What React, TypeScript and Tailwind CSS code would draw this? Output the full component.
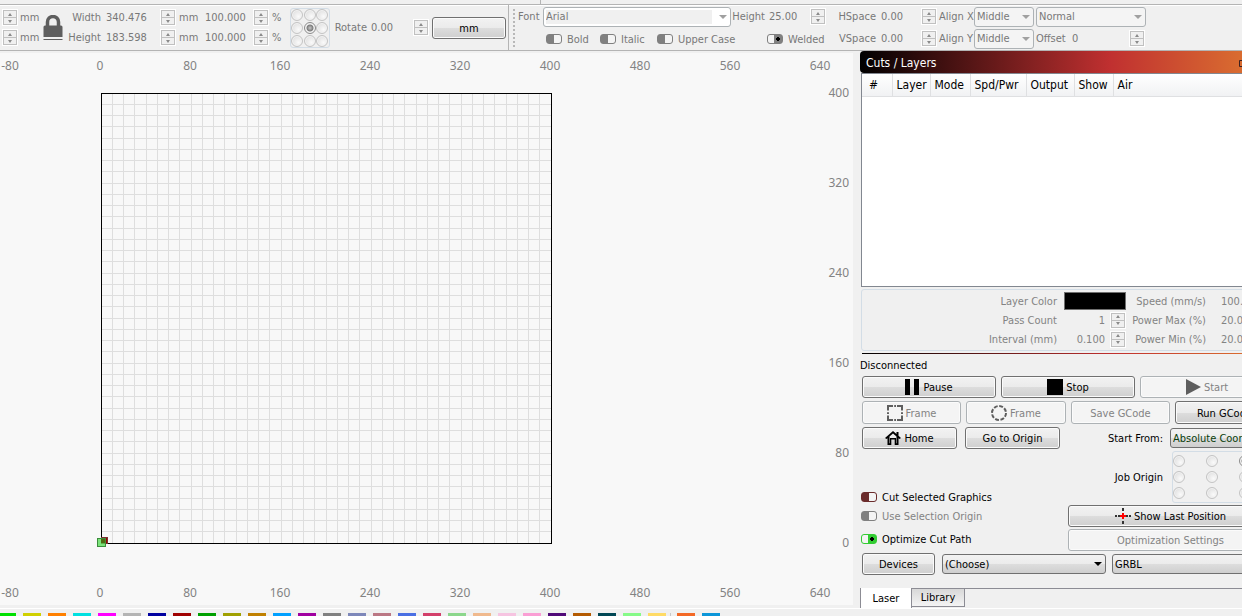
import { useId } from 'react';
import type { ReactNode } from 'react';
import clsx from 'clsx';
import { twMerge } from 'tailwind-merge';

const X_TICKS = [-80, 0, 80, 160, 240, 320, 400, 480, 560, 640];
const Y_TICKS = [400, 320, 240, 160, 80, 0];

const GRID_LINES = Array.from({ length: 39 }, (_, i) => Math.floor((i + 1) * 11.25));

const PALETTE = [
  '#00e000', '#d0d000', '#ff8000', '#00e0e0', '#ff00ff', '#b4b4b4', '#0000a0',
  '#a00000', '#00a000', '#a0a000', '#c08000', '#00a0ff', '#a000a0', '#808080',
  '#7d87b9', '#bb7784', '#4a6fe3', '#d33f6a', '#8cd78c', '#f0b98d', '#f6c4e1',
  '#fa9ed4', '#500a78', '#b45a00', '#004754', '#86fa88', '#ffdb66',
];
const TOOL_COLORS = ['#f36926', '#0c96d9'];

const LAYER_COLUMNS = [
  { label: '#', width: 'w-[30px] pl-[7px]' },
  { label: 'Layer', width: 'w-[38px]' },
  { label: 'Mode', width: 'w-[40px]' },
  { label: 'Spd/Pwr', width: 'w-[56px]' },
  { label: 'Output', width: 'w-[48px]' },
  { label: 'Show', width: 'w-[39px]' },
  { label: 'Air', width: '' },
];

function Spin({ name }: { name: string }) {
  return (
    <span className="flex h-[15px] w-[14px] shrink-0 flex-col border border-[#c0c0c0] bg-[#f0f0f0] outline outline-white">
      <button type="button" aria-label={`Increase ${name}`} className="flex flex-1 items-center justify-center border-b border-[#c0c0c0]">
        <svg width="4" height="3" viewBox="0 0 4 3"><path d="M2 0L4 3H0Z" fill="#8a8a8a" /></svg>
      </button>
      <button type="button" aria-label={`Decrease ${name}`} className="flex flex-1 items-center justify-center">
        <svg width="4" height="3" viewBox="0 0 4 3"><path d="M0 0H4L2 3Z" fill="#8a8a8a" /></svg>
      </button>
    </span>
  );
}

interface FieldProps {
  label: string;
  value: string;
  labelClass?: string;
  inputClass?: string;
}

function Field({ label, value, labelClass, inputClass }: FieldProps) {
  const id = useId();
  return (
    <>
      <label htmlFor={id} className={twMerge('shrink-0 pt-px text-right', labelClass)}>{label}</label>
      <input id={id} defaultValue={value} className={clsx('min-w-0 shrink-0 bg-transparent pt-px outline-none', inputClass)} />
    </>
  );
}

const TOGGLE_STYLES = {
  off: 'border-[#808080] bg-[linear-gradient(90deg,#808080_50%,#f4f4f4_50%)]',
  on: 'border-[#808080] bg-[radial-gradient(circle_at_10px_4px,#000_2px,transparent_2px),linear-gradient(90deg,#f4f4f4_40%,#808080_40%)]',
  red: 'border-[#6b2c2c] bg-[linear-gradient(90deg,#6b2c2c_50%,#f4f4f4_50%)]',
  green: 'border-[#33cc33] bg-[radial-gradient(circle_at_10px_4px,#000_2px,transparent_2px),linear-gradient(90deg,#f4f4f4_40%,#33cc33_40%)]',
};

interface ToggleProps {
  label: string;
  kind?: keyof typeof TOGGLE_STYLES;
  className?: string;
}

function Toggle({ label, kind = 'off', className }: ToggleProps) {
  return (
    <label className={clsx('flex shrink-0 items-center gap-[5px] whitespace-nowrap', className)}>
      <input
        type="checkbox"
        defaultChecked={kind === 'on' || kind === 'green'}
        className={clsx('h-[10px] w-4 shrink-0 appearance-none rounded-[3px] border bg-origin-padding', TOGGLE_STYLES[kind])}
      />
      <span className="pt-[2px]">{label}</span>
    </label>
  );
}

interface PickProps {
  label: string;
  value: string;
  className?: string;
  selectClass?: string;
  arrow?: string;
}

function Pick({ label, value, className, selectClass, arrow = '#a0a0a0' }: PickProps) {
  return (
    <span className={clsx('relative shrink-0', className)}>
      <select aria-label={label} className={clsx('h-full w-full appearance-none rounded-[3px] border pt-px pl-[2px] outline-none', selectClass)}>
        <option>{value}</option>
      </select>
      <svg className="pointer-events-none absolute top-1/2 right-1 -mt-[2px]" width="8" height="4" viewBox="0 0 8 4">
        <path d="M0 0H8L4 4Z" fill={arrow} />
      </svg>
    </span>
  );
}

const MUTED_SELECT = 'border-[#adb2b5] bg-[#f4f4f4] text-[#787878]';
const RAISED = 'border-[#707070] bg-[linear-gradient(#f2f2f2,#ebebeb_50%,#dddddd_50%,#cfcfcf)] text-black';

interface PushButtonProps {
  children: ReactNode;
  icon?: ReactNode;
  muted?: boolean;
  className?: string;
}

function PushButton({ children, icon, muted, className }: PushButtonProps) {
  return (
    <button
      type="button"
      disabled={muted}
      className={twMerge(
        'flex h-[22px] shrink-0 items-center justify-center gap-[3px] rounded-[3px] border whitespace-nowrap shadow-[inset_0_0_0_1px_#fbfbfb]',
        muted ? 'border-[#adb2b5] bg-[#f4f4f4] text-[#838383]' : RAISED,
        className,
      )}
    >
      {icon}
      <span className="pt-[2px]">{children}</span>
    </button>
  );
}

interface AnchorPadProps {
  name: string;
  selected: number;
  className: string;
}

function AnchorPad({ name, selected, className }: AnchorPadProps) {
  return (
    <div role="radiogroup" aria-label={name} className={clsx('grid shrink-0 grid-cols-3 content-center rounded-[3px] border border-[#d3dde6]', className)}>
      {Array.from({ length: 9 }, (_, i) => (
        <input
          key={i}
          type="radio"
          name={name}
          aria-label={`${name} ${i + 1}`}
          defaultChecked={i === selected}
          className="size-3 appearance-none self-center rounded-full border border-[#c4c4c4] bg-[radial-gradient(circle_at_65%_65%,#fafafa,#d8d8d8)] shadow-[inset_0_0_0_1px_#f3f3f3] checked:border-[#8c8c8c] checked:bg-[radial-gradient(circle_at_50%_50%,#c8c8c8_0,#7c7c7c_3px,#f0f0f0_4px)]"
        />
      ))}
    </div>
  );
}

function LockIcon() {
  return (
    <svg width="20" height="26" viewBox="0 0 20 26">
      <path d="M4.500 11V7a5.500 5.500 0 0 1 11 0V11" fill="none" stroke="#5e5e5e" strokeWidth="3.500" />
      <path d="M2 10.500H18Q19.500 10.500 19.500 12V22H.5V12Q.5 10.500 2 10.500Z" fill="#5e5e5e" />
      <path d="M.5 24.500H19.500" stroke="#5e5e5e" />
    </svg>
  );
}

function TransformBar() {
  return (
    <div className="flex h-full w-[509px] shrink-0 items-center border-r border-[#b4b4b4]">
      <div className="flex w-[42px] shrink-0 flex-col gap-[5px] pl-[3px]">
        <div className="flex items-center gap-[3px]"><Spin name="X" /><span className="pt-px">mm</span></div>
        <div className="flex items-center gap-[3px]"><Spin name="Y" /><span className="pt-px">mm</span></div>
      </div>
      <button type="button" aria-label="Lock aspect ratio" className="w-[22px] shrink-0 pl-px"><LockIcon /></button>
      <div className="flex flex-col gap-[5px]">
        <div className="flex items-center">
          <Field label="Width" value="340.476" labelClass="w-[37px]" inputClass="ml-[5px] w-[55px]" />
          <Spin name="width" /><span className="ml-1 w-[26px] pt-px">mm</span>
          <input aria-label="Width percent" defaultValue="100.000" className="w-[49px] bg-transparent pt-px" />
          <Spin name="width percent" /><span className="ml-1 pt-px">%</span>
        </div>
        <div className="flex items-center">
          <Field label="Height" value="183.598" labelClass="w-[37px]" inputClass="ml-[5px] w-[55px]" />
          <Spin name="height" /><span className="ml-1 w-[26px] pt-px">mm</span>
          <input aria-label="Height percent" defaultValue="100.000" className="w-[49px] bg-transparent pt-px" />
          <Spin name="height percent" /><span className="ml-1 pt-px">%</span>
        </div>
      </div>
      <div className="ml-auto flex items-center pr-[2px]">
        <AnchorPad name="Anchor" selected={4} className="h-10 w-10 grid-rows-[13px_13px_13px]" />
        <Field label="Rotate" value="0.00" labelClass="ml-[3px] w-[34px]" inputClass="ml-1 w-[43px]" />
        <Spin name="rotation" />
        <PushButton className="ml-1 w-[74px]">mm</PushButton>
      </div>
    </div>
  );
}

function TextBar() {
  return (
    <div className="flex h-full items-center">
      <div className="ml-1 h-[38px] w-[2px] shrink-0 bg-[repeating-linear-gradient(#b8b8b8_0_2px,transparent_2px_4px)]" />
      <div className="flex w-[311px] shrink-0 flex-col gap-[2px]">
        <div className="flex h-5 items-center">
          <span className="w-[28px] pt-px pl-[3px]">Font</span>
          <Pick label="Font" value="Arial" className="h-5 w-[188px]" selectClass="border-[#adb2b5] bg-[#f0f0f0] text-[#787878] shadow-[inset_0_0_0_2px_#fff,inset_-18px_0_0_#fff]" />
          <Field label="Height" value="25.00" labelClass="w-[34px]" inputClass="ml-1 w-[42px]" />
          <Spin name="height" />
        </div>
        <div className="flex h-5 items-center pl-[31px]">
          <Toggle label="Bold" className="w-[54px]" />
          <Toggle label="Italic" className="w-[57px]" />
          <Toggle label="Upper Case" className="w-[110px]" />
          <Toggle label="Welded" kind="on" />
        </div>
      </div>
      <div className="flex shrink-0 flex-col gap-[2px]">
        <div className="flex h-5 items-center">
          <Field label="HSpace" value="0.00" labelClass="w-[50px]" inputClass="ml-[5px] w-[41px]" />
          <Spin name="horizontal space" />
          <span className="w-[38px] pt-px pl-[3px] whitespace-nowrap">Align X</span>
          <Pick label="Align X" value="Middle" className="h-5 w-[60px]" selectClass={MUTED_SELECT} />
          <Pick label="Style" value="Normal" className="ml-[2px] h-5 w-[110px]" selectClass={MUTED_SELECT} />
        </div>
        <div className="flex h-5 items-center">
          <Field label="VSpace" value="0.00" labelClass="w-[50px]" inputClass="ml-[5px] w-[41px]" />
          <Spin name="vertical space" />
          <span className="w-[38px] pt-px pl-[3px] whitespace-nowrap">Align Y</span>
          <Pick label="Align Y" value="Middle" className="h-5 w-[60px]" selectClass={MUTED_SELECT} />
          <Field label="Offset" value="0" labelClass="w-[36px] pl-[2px] text-left" inputClass="ml-[2px] w-[58px]" />
          <Spin name="offset" />
        </div>
      </div>
    </div>
  );
}

function RulerRow({ className }: { className: string }) {
  return (
    <div className={clsx('-ml-[35px] flex shrink-0 items-center', className)}>
      {X_TICKS.map((tick) => (
        <span key={tick} className="w-[90px] shrink-0 text-center">{tick}</span>
      ))}
    </div>
  );
}

function Workspace() {
  return (
    <section className="mt-[2px] mb-[3px] flex min-w-0 flex-1 flex-col overflow-hidden bg-[#f8f8f8] font-['Noto_Sans',sans-serif] text-[12px] text-[#838383]">
      <RulerRow className="h-[26px]" />
      <div className="flex flex-1 justify-between">
        <svg className="mt-[14px] ml-[101px] shrink-0 overflow-visible" width="451" height="451" shapeRendering="crispEdges">
          <g stroke="#dedede">
            {GRID_LINES.map((p) => (
              <path key={p} d={`M${p + 0.5} 1V450M1 ${p + 0.5}H450`} />
            ))}
          </g>
          <rect x="0.5" y="0.5" width="450" height="450" fill="none" stroke="#000" />
          {/* laser head and origin markers */}
          <rect x="0.5" y="444.500" width="6" height="6" fill="#a00000" stroke="#7c3030" />
          <rect x="-3.500" y="445.500" width="8" height="8" fill="#50dc50" fillOpacity="0.750" stroke="#3c8c3c" />
          <rect x="0" y="446" width="4" height="4" fill="#4c6a10" />
        </svg>
        <div className="flex flex-col gap-[72px] pt-[5px] pr-[4px] text-right leading-[18px]">
          {Y_TICKS.map((tick) => <span key={tick}>{tick}</span>)}
        </div>
      </div>
      <RulerRow className="h-[24px]" />
    </section>
  );
}

function CutLayers() {
  return (
    <>
      <div className="flex h-[22px] shrink-0 items-center justify-between overflow-hidden rounded-l-[4px] bg-[linear-gradient(90deg,#000,#c03030_250px,#d96c30_382px)] pl-[6px] text-[12px] text-white">
        <h2 className="pt-[2px]">Cuts / Layers</h2>
        <svg className="mr-[25px]" width="10" height="10" viewBox="0 0 10 10" fill="none" stroke="#3c2020">
          <path d="M3.500 3.500V.5H9.500V6.500H6.500M.5 3.500H6.500V9.500H.5Z" />
        </svg>
      </div>
      <div className="ml-px h-[214px] shrink-0 border border-[#828790] bg-white text-[12px] text-black">
        <table className="w-full table-fixed border-collapse">
          <thead>
            <tr className="h-[22px] bg-linear-to-b from-white to-[#f1f2f4]">
              {LAYER_COLUMNS.map((column) => (
                <th key={column.label} className={twMerge('border-r border-b border-[#dfe0e2] p-0 pt-px pl-1 text-left font-normal whitespace-nowrap', column.width)}>
                  {column.label}
                </th>
              ))}
            </tr>
          </thead>
        </table>
      </div>
      <div className="mt-[2px] ml-px flex h-[62px] shrink-0 flex-col justify-center rounded-[3px] border border-[#d3dde6] text-[#838383]">
        <div className="flex h-[19px] items-center">
          <span className="w-[195px] pt-[2px] text-right">Layer Color</span>
          <button type="button" aria-label="Layer Color" className="ml-[7px] h-[18px] w-[62px] border border-[#707070] bg-black" />
          <Field label="Speed (mm/s)" value="100.0" labelClass="w-[80px]" inputClass="ml-[15px] w-[40px]" />
        </div>
        <div className="flex h-[19px] items-center">
          <Field label="Pass Count" value="1" labelClass="w-[195px]" inputClass="w-[48px] text-right" />
          <span className="ml-[6px] flex"><Spin name="pass count" /></span>
          <Field label="Power Max (%)" value="20.00" labelClass="w-[81px]" inputClass="ml-[15px] w-[40px]" />
        </div>
        <div className="flex h-[19px] items-center">
          <Field label="Interval (mm)" value="0.100" labelClass="w-[195px]" inputClass="w-[48px] text-right" />
          <span className="ml-[6px] flex"><Spin name="interval" /></span>
          <Field label="Power Min (%)" value="20.00" labelClass="w-[81px]" inputClass="ml-[15px] w-[40px]" />
        </div>
      </div>
    </>
  );
}

function LaserPanel() {
  return (
    <>
      <div className="mt-[2px] ml-[2px] h-px shrink-0 bg-[linear-gradient(90deg,#000,#c03030_250px,#d96c30_382px)]" />
      <p className="flex h-[22px] shrink-0 items-center pt-px">Disconnected</p>
      <div className="flex flex-col gap-[3px] pl-[2px]">
        <div className="flex gap-[5px]">
          <PushButton className="w-[134px]" icon={<svg width="15" height="16"><path d="M0 0h5v16H0zM9 0h5v16h-5z" /></svg>}>Pause</PushButton>
          <PushButton className="w-[134px]" icon={<svg width="16" height="16"><path d="M0 0h16v16H0z" /></svg>}>Stop</PushButton>
          <PushButton muted className="w-[134px]" icon={<svg width="15" height="16"><path d="M0 0L15 8L0 16Z" fill="#5e5e5e" /></svg>}>Start</PushButton>
        </div>
        <div className="flex gap-[5px]">
          <PushButton
            muted
            className="h-[23px] w-[99px]"
            icon={(
              <svg width="16" height="16" fill="none" stroke="#5e5e5e" strokeWidth="2">
                <path d="M1 5.500V1H6M10 1H15V5.500M15 10.500V15H10M6 15H1V10.500M1 7.200V9M15 7.200V9M7.200 1H9M7.200 15H9" />
              </svg>
            )}
          >
            Frame
          </PushButton>
          <PushButton
            muted
            className="h-[23px] w-[100px]"
            icon={(
              <svg width="16" height="16" fill="none" stroke="#5e5e5e" strokeWidth="2">
                <circle cx="8" cy="8" r="7" strokeDasharray="3.900 1.600" />
              </svg>
            )}
          >
            Frame
          </PushButton>
          <PushButton muted className="h-[23px] w-[99px]">Save GCode</PushButton>
          <PushButton className="h-[23px] w-[99px]">Run GCode</PushButton>
        </div>
        <div className="flex items-center">
          <PushButton
            className="w-[95px]"
            icon={(
              <svg width="16" height="14" viewBox="0 0 16 14">
                <path d="M8 0L11.500 3V1H13.500V4.800L16 7L14.500 8L13.500 7.200V14H9.700V8.500H6.300V14H2.500V7.200L1.500 8L0 7ZM8 2.600L4.500 5.600V12.200H5V7H11V12.200H11.500V5.600Z" />
              </svg>
            )}
          >
            Home
          </PushButton>
          <PushButton className="ml-2 w-[95px]">Go to Origin</PushButton>
          <span className="w-[103px] pt-[2px] text-right">Start From:</span>
          <Pick label="Start From" value="Absolute Coords" arrow="#000" className="ml-[7px] h-[20px] w-[104px]" selectClass="border-[#707070] bg-[linear-gradient(#f2f2f2,#ebebeb_50%,#dddddd_50%,#cfcfcf)] text-[#0a3c0a]" />
        </div>
      </div>
      <div className="mt-[2px] flex h-[52px] shrink-0">
        <div className="flex w-[200px] flex-col justify-end">
          <Toggle label="Cut Selected Graphics" kind="red" className="h-3 pl-px" />
        </div>
        <span className="w-[103px] self-center pt-[2px] text-right">Job Origin</span>
        <AnchorPad name="Job Origin" selected={2} className="ml-[9px] w-[101px] grid-rows-[16px_16px_16px]" />
      </div>
      <div className="mt-[2px] flex shrink-0 pl-px">
        <div className="flex w-[207px] flex-col gap-[5px]">
          <Toggle label="Use Selection Origin" className="h-[22px] text-[#838383]" />
          <Toggle label="Optimize Cut Path" kind="green" className="h-[14px]" />
        </div>
        <div className="flex flex-col gap-[2px]">
          <PushButton
            className="w-[205px]"
            icon={(
              <svg width="16" height="16">
                <path d="M7 0h2v3H7zM7 13h2v3H7zM0 7h2v2H0zM3 7h2v2H3zM11 7h2v2h-2zM14 7h2v2h-2z" fill="#333" />
                <path d="M7 5h2v2h2v2H9v2H7V9H5V7h2z" fill="#f00" />
              </svg>
            )}
          >
            Show Last Position
          </PushButton>
          <PushButton muted className="w-[205px]">Optimization Settings</PushButton>
        </div>
      </div>
      <div className="mt-[2px] flex shrink-0 items-center pl-[2px]">
        <PushButton className="w-[73px]">Devices</PushButton>
        <Pick label="Device" value="(Choose)" arrow="#000" className="ml-[7px] h-[20px] w-[164px]" selectClass={RAISED} />
        <Pick label="Controller" value="GRBL" arrow="#000" className="ml-[6px] h-[20px] w-[162px]" selectClass={RAISED} />
      </div>
      <div role="tablist" className="mt-auto flex h-[20px] shrink-0 items-start border-t border-[#8c8c94]">
        <button type="button" role="tab" aria-selected="true" className="-mt-px h-[21px] w-[52px] border-x border-b border-[#8c8c94] bg-white pt-px">Laser</button>
        <button type="button" role="tab" aria-selected="false" className="h-[18px] w-[53px] border-r border-b border-[#8c8c94] bg-linear-to-b from-[#d8d8d8] to-[#f4f4f4]">Library</button>
      </div>
    </>
  );
}

export default function App() {
  return (
    <div className="flex h-screen flex-col overflow-hidden bg-[#f0f0f0] font-['DejaVu_Sans_Condensed','Noto_Sans',sans-serif] text-[11px] leading-[14px] text-black">
      <div className="h-1 shrink-0 pl-[540px]"><div className="h-full w-px bg-[#b4b4b4]" /></div>
      <header className="flex h-[47px] shrink-0 overflow-hidden border-y border-[#b4b4b4] text-[#787878] shadow-[inset_0_1px_0_#fff]">
        <TransformBar />
        <TextBar />
      </header>
      <main className="flex min-h-0 flex-1">
        <Workspace />
        <aside className="ml-[7px] w-[382px] shrink-0 overflow-hidden">
          <div className="flex h-full w-[414px] flex-col">
            <CutLayers />
            <LaserPanel />
          </div>
        </aside>
      </main>
      <footer className="flex h-2 shrink-0 items-end gap-[7px] overflow-hidden border-t border-white">
        <div className="-ml-[2px] flex gap-[7px]">
          {PALETTE.map((color) => (
            <button key={color} type="button" aria-label={color} className="h-[3px] w-[18px] shrink-0" style={{ backgroundColor: color }} />
          ))}
        </div>
        <div className="-ml-[3px] flex gap-[7px] border-l border-[#c8c8c8] pl-[6px]">
          {TOOL_COLORS.map((color) => (
            <button key={color} type="button" aria-label={color} className="h-[3px] w-[18px] shrink-0" style={{ backgroundColor: color }} />
          ))}
        </div>
      </footer>
    </div>
  );
}
